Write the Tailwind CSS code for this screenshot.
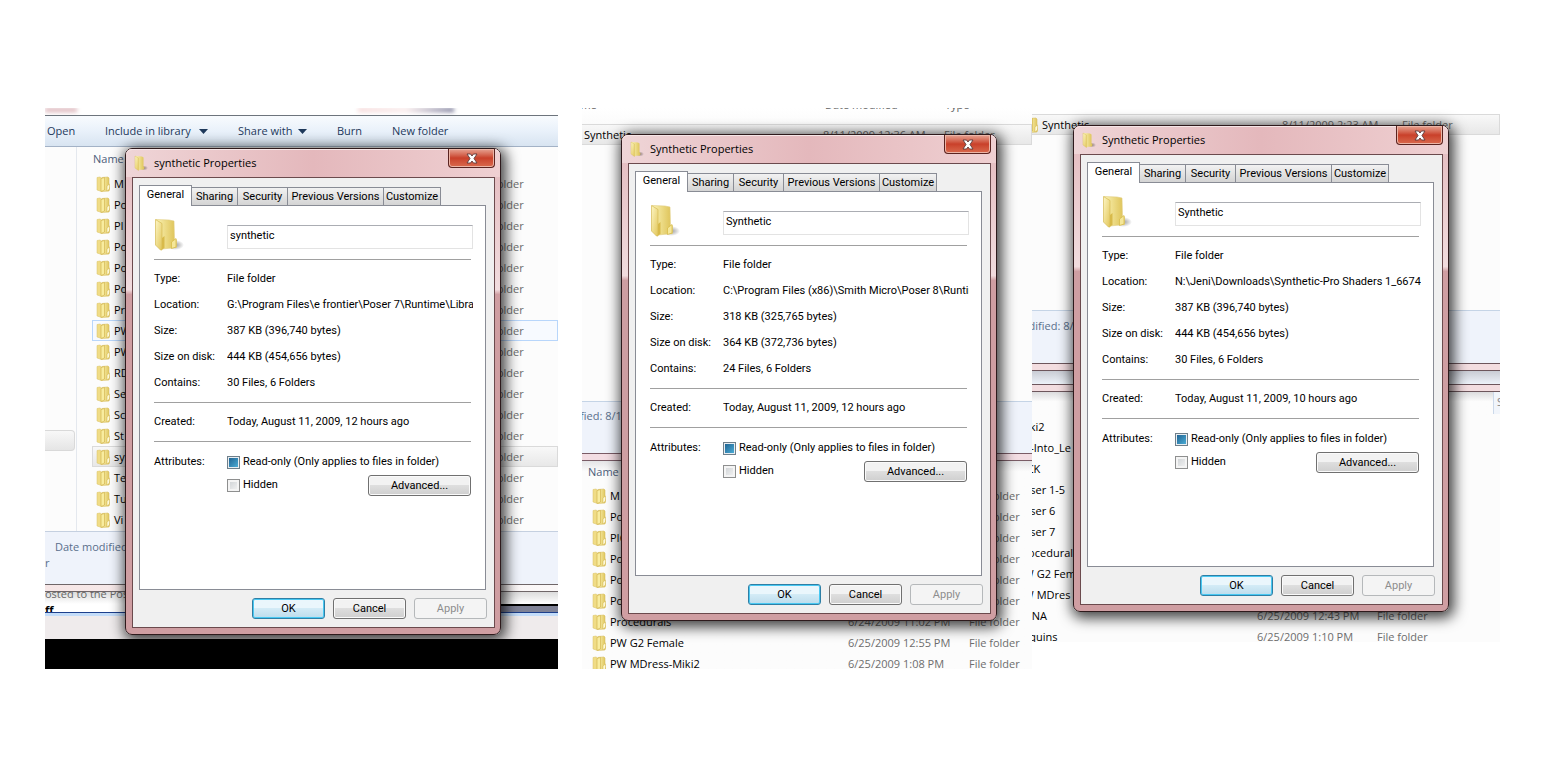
<!DOCTYPE html>
<html lang="en">
<head>
    <meta charset="UTF-8">
    <meta name="viewport" content="width=device-width, initial-scale=1.0">
    <title>Folder Properties</title>
    <script src="https://cdn.jsdelivr.net/npm/@tailwindcss/browser@4"></script>
</head>
<body class="bg-white text-black font-['Open_Sans',sans-serif] text-[11px] leading-4">
    <!-- Shared icons -->
    <svg class="absolute size-0" aria-hidden="true">
        <defs>
            <linearGradient id="fold-back" x1="0" x2="1">
                <stop offset="0" stop-color="#fbf3b4"></stop>
                <stop offset="1" stop-color="#dcc052"></stop>
            </linearGradient>
            <linearGradient id="fold-front" x1="0" x2="1" y2="1">
                <stop offset="0" stop-color="#fdf6c4"></stop>
                <stop offset="1" stop-color="#e2c65a"></stop>
            </linearGradient>
            <radialGradient id="fold-shade">
                <stop offset="0" stop-color="#000" stop-opacity=".4"></stop>
                <stop offset="1" stop-color="#000" stop-opacity="0"></stop>
            </radialGradient>
        </defs>
        <symbol id="folder-small" viewBox="0 0 14 16">
            <path d="M6 1.5l6-.5 1 1v9l1 1-1 3-7 .5z" fill="url(#fold-back)" stroke="#d9c065" stroke-width=".6"></path>
            <path d="M1 1.5L4 1l1.500 1v13.500L1 14z" fill="#f0dc86" stroke="#d9c065" stroke-width=".5"></path>
            <path d="M5 2.500l3.500-1v12.500L5 15.500z" fill="#f8ec9f" stroke="#cfae45" stroke-width=".6"></path>
            <path d="M11 10l2.500-2v5L11 15z" fill="#fffad8" stroke="#d3b44c" stroke-width=".5"></path>
        </symbol>
        <symbol id="folder-title" viewBox="0 0 14 16">
            <ellipse cx="10" cy="13" rx="4" ry="2.500" fill="url(#fold-shade)"></ellipse>
            <path d="M2 1l6 .5 1.500 1v9l1 .5-.5 2.500-6 .5z" fill="url(#fold-back)"></path>
            <path d="M1 1l3.500 2v12.500L1 13z" fill="url(#fold-front)" stroke="#d6ba55" stroke-width=".4"></path>
        </symbol>
        <symbol id="folder-large" viewBox="0 0 30 34">
            <ellipse cx="21" cy="27" rx="9" ry="5" fill="url(#fold-shade)"></ellipse>
            <path d="M2 1.500L15 2l5 1 .5 20 2-1.500v8L8 31z" fill="url(#fold-back)" stroke="#e0cc80" stroke-width=".6"></path>
            <path d="M1.500 1.500L8 5.500V32L6.500 32 1.500 27z" fill="url(#fold-front)" stroke="#d6ba55" stroke-width=".7"></path>
            <path d="M8 20l2.500-2v12L8 31.500z" fill="#d8ba4a"></path>
            <path d="M17.500 24l4.500-3.500v8.500l-4.500 1.500z" fill="#f5e799" stroke="#d6b944" stroke-width=".7"></path>
        </symbol>
    </svg>

    <main class="flex items-start pt-[108px] pl-[45px] pr-[60px]">
        <!-- First window -->
        <section class="relative flex-[513] min-w-0 overflow-hidden bg-[#fcfcfc]">
            <div class="h-[7px] bg-white flex justify-between overflow-hidden">
                <span class="w-8 h-1 bg-[#d9b0b6] blur-[2px]"></span>
                <span class="w-24 h-1 mr-26 bg-linear-to-r from-[#f5d5d5] via-[#f8e8e8] to-[#6f7090] blur-[2px]"></span>
            </div>
            <nav class="h-8 flex items-center border-t border-b border-t-[#6d747c] border-b-[#a3b2c6] bg-linear-to-b from-[#f8fbfe] via-[#e9f1fa] to-[#d8e4f1] text-[#1e395b] whitespace-nowrap">
                <button class="w-[60px] pl-0.5 text-left">Open</button>
                <button class="w-[133px] flex items-center gap-2">Include in library
                    <svg class="w-[9px] h-[5px]" viewBox="0 0 9 5"><path d="M0 0h9L4.500 5z" fill="#1e395b"></path></svg>
                </button>
                <button class="w-[99px] flex items-center gap-1.5">Share with
                    <svg class="w-[9px] h-[5px]" viewBox="0 0 9 5"><path d="M0 0h9L4.500 5z" fill="#1e395b"></path></svg>
                </button>
                <button class="w-[55px] text-left">Burn</button>
                <button>New folder</button>
            </nav>
            <div class="flex">
                <div class="w-8 border-r border-[#e4e8ee] flex flex-col justify-end pb-20">
                    <span class="h-[21px] mr-px rounded-r-sm border border-l-0 border-[#d9d9d9] bg-linear-to-b from-[#f8f8f8] to-[#e5e5e5]"></span>
                </div>
                <div class="flex-1 min-w-0 pl-[15px]">
                    <div class="h-[26px] pl-px pt-1 text-[#4c607a]">Name</div>
                    <div data-list="first"></div>
                    <div class="h-px"></div>
                </div>
            </div>
            <div class="h-[53px] border-t border-[#c5d0e0] bg-[#eff3fb] text-[#5a6f8c] pt-[7px]">
                <p class="pl-2.5">Date modified:</p>
                <p>r</p>
            </div>
            <div class="h-2 border-y border-[#6f6668] bg-linear-to-r from-[#f6e6e6] to-[#fbf8f8]"></div>
            <div class="h-5 overflow-hidden flex justify-between bg-linear-to-b from-[#dcdcdc] to-white to-60%">
                <div class="-mt-1.5 leading-4 whitespace-nowrap text-[#666]">
                    <p>osted to the Poser</p>
                    <p class="font-bold text-black">ff</p>
                </div>
                <div class="w-[60px] mt-3 border-t-2 border-black bg-[#7f8296]"></div>
            </div>
            <div class="h-1 border-t border-[#1d3f8c] bg-[#c3dcf9]"></div>
            <div class="h-[23px] bg-[#efebec]"></div>
            <div class="h-[30px] bg-black"></div>
            <div class="absolute left-20 top-10" data-dialog="0"></div>
        </section>

        <!-- Second window -->
        <section class="relative flex-[450] min-w-0 ml-6 overflow-hidden bg-[#fcfcfc]">
            <div class="h-4 overflow-hidden bg-linear-to-b from-white to-[#fbfbfb] text-[#666]">
                <div class="flex -mt-[11px] -ml-5">
                    <span class="flex-1 pl-1">Name</span>
                    <span class="w-[120px]">Date modified</span>
                    <span class="w-[87px]">Type</span>
                </div>
            </div>
            <div class="-ml-5" data-list="secondTop"></div>
            <div class="h-[256px]"></div>
            <div class="h-[52px] border-t border-[#c5d4e6] bg-[#eff3fb] text-[#5a6f8c] pt-1.5">
                <p class="-ml-7">Modified: 8/1</p>
            </div>
            <div class="h-2 border-y border-[#7a5c66] bg-[#f3dde3]"></div>
            <div class="pl-1.5 -mb-[5px] bg-linear-to-b from-[#e4e4e6] to-[#fcfcfc] to-5%">
                <div class="h-6 pt-[3px] text-[#4c607a]">Name</div>
                <div data-list="second"></div>
            </div>
            <div class="absolute left-[39px] top-[26px]" data-dialog="1"></div>
        </section>

        <!-- Third window -->
        <section class="relative flex-[468] min-w-0 overflow-hidden bg-[#fcfcfc]">
            <div class="h-1.5 bg-white"></div>
            <div class="-ml-3" data-list="thirdTop"></div>
            <div class="h-[175px]"></div>
            <div class="h-[53px] border-t border-[#c5d4e6] bg-[#eff3fb] text-[#5a6f8c] pt-[7px]">
                <p class="-ml-5">Modified: 8/</p>
            </div>
            <div class="h-2 border-y border-[#6d565c] bg-[#f3dde0]"></div>
            <div class="h-[13px] bg-linear-to-b from-[#c9ccd4] to-[#edf2f9]"></div>
            <div class="h-2 border-y border-[#6d565c] bg-[#f3dde0]"></div>
            <div class="h-6 flex justify-end bg-linear-to-b from-[#dcdcde] to-[#fcfcfc] to-40%">
                <span class="w-[7px] h-[22px] overflow-hidden border-l border-[#ccd9ea] bg-[#f1f5fb] pl-[3px] pt-0.5 text-[#888]">S</span>
            </div>
            <div class="-ml-[37px] -mb-[5px]" data-list="third"></div>
            <div class="absolute left-[41px] top-[17px]" data-dialog="2"></div>
        </section>
    </main>

    <script>
        const dialogs = [
            { title: 'synthetic Properties', name: 'synthetic', location: 'G:\\Program Files\\e frontier\\Poser 7\\Runtime\\Libraries', size: '387 KB (396,740 bytes)', disk: '444 KB (454,656 bytes)', contains: '30 Files, 6 Folders', created: 'Today, August 11, 2009, 12 hours ago' },
            { title: 'Synthetic Properties', name: 'Synthetic', location: 'C:\\Program Files (x86)\\Smith Micro\\Poser 8\\Runtime', size: '318 KB (325,765 bytes)', disk: '364 KB (372,736 bytes)', contains: '24 Files, 6 Folders', created: 'Today, August 11, 2009, 12 hours ago' },
            { title: 'Synthetic Properties', name: 'Synthetic', location: 'N:\\Jeni\\Downloads\\Synthetic-Pro Shaders 1_66742', size: '387 KB (396,740 bytes)', disk: '444 KB (454,656 bytes)', contains: '30 Files, 6 Folders', created: 'Today, August 11, 2009, 10 hours ago' }
        ];

        // rows: [name, date, state]
        const lists = {
            first: {
                date: '', type: 'w-[85px]',
                rows: [['M'], ['Po'], ['PI'], ['Po'], ['Po'], ['Po'], ['Pr'], ['PW', '', 'hover'], ['PW'], ['RD'], ['Se'], ['Sc'], ['St'], ['sy', '', 'selected'], ['Te'], ['Tu'], ['Vi']]
            },
            secondTop: { date: 'w-[121px]', type: 'w-[88px]', rows: [['Synthetic', '8/11/2009 12:36 AM', 'selected']] },
            second: {
                date: 'w-[121px]', type: 'w-[63px]',
                rows: [['M'], ['Po'], ['PIC'], ['Po'], ['Po'], ['Po'], ['Procedurals', '6/24/2009 11:02 PM'], ['PW G2 Female', '6/25/2009 12:55 PM'], ['PW MDress-Miki2', '6/25/2009 1:08 PM']]
            },
            thirdTop: { date: 'w-[120px]', type: 'w-[98px]', rows: [['Synthetic', '8/11/2009 2:23 AM', 'selected']] },
            third: {
                date: 'w-[120px]', type: 'w-[123px]',
                rows: [['Miki2'], ['Po-Into_Le'], ['PICK'], ['Poser 1-5'], ['Poser 6'], ['Poser 7'], ['Procedural'], ['PW G2 Fem'], ['PW MDres'], ['RDNA', '6/25/2009 12:43 PM'], ['Sequins', '6/25/2009 1:10 PM']]
            }
        };

        const rowState = {
            hover: 'bg-[#f7faff] outline outline-[#b8d6fb] -outline-offset-1',
            selected: 'bg-linear-to-b from-[#f9f9f9] to-[#e7e7e7] outline outline-[#dadada] -outline-offset-1'
        };

        document.querySelectorAll('[data-list]').forEach(el => {
            const list = lists[el.dataset.list];
            el.innerHTML = `<table class="w-full table-fixed whitespace-nowrap">
                ${list.rows.map(([name, date, state]) => `
                <tr class="h-[21px] ${rowState[state] || ''}">
                    <td class="p-0 pl-1 overflow-hidden"><span class="flex items-center gap-1"><svg class="w-3.5 h-4 shrink-0"><use href="#folder-small"></use></svg>${name}</span></td>
                    ${list.date ? `<td class="p-0 ${list.date} text-[#6d6d6d]">${date || ''}</td>` : ''}
                    <td class="p-0 ${list.type} text-[#6d6d6d]">File folder</td>
                </tr>`).join('')}
            </table>`;
        });

        const button = 'h-[21px] rounded-[3px] border text-center';
        const normal = 'border-[#707070] bg-linear-to-b from-[#f2f2f2] from-45% via-[#dedede] via-50% to-[#cfcfcf] shadow-[inset_0_0_0_1px_#fafafa]';

        document.querySelectorAll('[data-dialog]').forEach(el => {
            const i = el.dataset.dialog;
            const d = dialogs[i];
            const tab = (label, width) => `<button role="tab" class="h-[18px] -ml-px ${width} whitespace-nowrap border border-b-0 border-[#898c95] bg-linear-to-b from-[#f2f2f2] to-[#d4d4d4]">${label}</button>`;
            const row = (label, value) => `<dt>${label}</dt><dd class="overflow-hidden">${value}</dd>`;
            el.innerHTML = `
            <div role="dialog" aria-label="${d.title}" class="w-[376px] rounded-[7px] border border-[#2e1a1c] bg-linear-to-b from-[#e3b9bd] from-0% via-[#f1dcde] via-29% to-[#cf9ea2] to-30% shadow-[2px_3px_14px_3px_rgba(0,0,0,0.75)] pl-1.5 pr-[5px] pb-1.5">
                <header class="h-7 -ml-1.5 -mr-[5px] pl-2 pr-[5px] flex rounded-t-[6px] bg-linear-to-r from-[#efd5d7] via-[#e4b8bc] to-[#efd0d2] shadow-[inset_0_1px_0_#f6e6e7]">
                    <svg class="w-3.5 h-4 mt-1.5"><use href="#folder-title"></use></svg>
                    <h2 class="flex-1 pt-1.5 pl-1.5">${d.title}</h2>
                    <button aria-label="Close" class="w-[47px] h-[19px] flex items-center justify-center rounded-b-[4px] border border-t-0 border-[#5a2320] bg-linear-to-b from-[#e5a393] from-0% via-[#c9402a] via-50% to-[#d9694d] shadow-[inset_0_0_0_1px_#ecb5a6]">
                        <svg class="w-3 h-[11px]" viewBox="0 0 12 11"><path d="M1 1h3.500L6 3l1.500-2H11L8 5.500l3 4.500H7.500L6 8l-1.500 2H1l3-4.500z" fill="#fff" stroke="#5b3a3a" stroke-width=".9"></path></svg>
                    </button>
                </header>
                <div class="border border-[#6b4a4d] bg-[#f0f0f0] pl-1.5 pr-[7px] pt-1.5 pb-2 font-['Roboto',sans-serif]">
                    <div role="tablist" class="flex items-end h-[21px]">
                        <button role="tab" class="relative h-[21px] -mb-px w-[53px] pb-0.5 border border-b-0 border-[#898c95] bg-white">General</button>
                        ${tab('Sharing', 'w-[47px]')}${tab('Security', 'w-[51px]')}${tab('Previous Versions', 'w-[97px]')}${tab('Customize', 'w-[58px]')}
                    </div>
                    <div class="h-[385px] mr-px border border-[#898c95] bg-white pl-3.5 pr-3">
                        <div class="grid grid-cols-[73px_1fr] pt-3 h-[53px]">
                            <svg class="w-[30px] h-[34px]"><use href="#folder-large"></use></svg>
                            <input type="text" aria-label="Name" value="${d.name}" class="mt-[7px] h-6 w-full border border-[#e3e3e3] border-t-[#abadb3] pl-0.5 pb-1 bg-white">
                        </div>
                        <hr class="mr-0.5 border-[#a0a0a0]">
                        <dl class="grid grid-cols-[73px_1fr] auto-rows-[26px] items-center h-[142px] pt-1.5 whitespace-nowrap">
                            ${row('Type:', 'File folder')}
                            ${row('Location:', d.location)}
                            ${row('Size:', d.size)}
                            ${row('Size on disk:', d.disk)}
                            ${row('Contains:', d.contains)}
                        </dl>
                        <hr class="mr-0.5 border-[#a0a0a0]">
                        <dl class="grid grid-cols-[73px_1fr] items-center h-[38px] whitespace-nowrap">
                            ${row('Created:', d.created)}
                        </dl>
                        <hr class="mr-0.5 border-[#a0a0a0]">
                        <div class="grid grid-cols-[73px_1fr] pt-3">
                            <span>Attributes:</span>
                            <div>
                                <div class="flex items-center gap-[3px] h-4">
                                    <input type="checkbox" id="read-only-${i}" class="appearance-none size-[13px] border border-[#6f7f8a] bg-linear-to-br from-[#1d5d8c] to-[#4fb4dd] shadow-[inset_0_0_0_1px_#e9eef2]">
                                    <label for="read-only-${i}">Read-only (Only applies to files in folder)</label>
                                </div>
                                <div class="flex mr-0.5">
                                    <div class="flex items-center gap-[3px] h-4 mt-[7px]">
                                        <input type="checkbox" id="hidden-${i}" class="appearance-none size-[13px] border border-[#8e8f8f] bg-linear-to-br from-[#cbcfd2] to-[#f6f6f6] shadow-[inset_0_0_0_2px_#f4f4f4]">
                                        <label for="hidden-${i}">Hidden</label>
                                    </div>
                                    <button class="${button} ${normal} w-[103px] ml-auto mt-[5px]">Advanced...</button>
                                </div>
                            </div>
                        </div>
                    </div>
                    <div class="flex justify-end gap-2 pt-2">
                        <button class="${button} w-[73px] border-[#2f7fa5] bg-linear-to-b from-[#eaf6fc] from-45% via-[#d3ebf6] via-50% to-[#bcdcec] shadow-[inset_0_0_0_1px_#48c8f2]">OK</button>
                        <button class="${button} ${normal} w-[73px]">Cancel</button>
                        <button disabled class="${button} w-[73px] border-[#b5b8ba] bg-[#f4f4f4] text-[#8d8d8d]">Apply</button>
                    </div>
                </div>
            </div>`;
            el.querySelector('#read-only-' + i).indeterminate = true;
        });
    </script>
</body>
</html>
